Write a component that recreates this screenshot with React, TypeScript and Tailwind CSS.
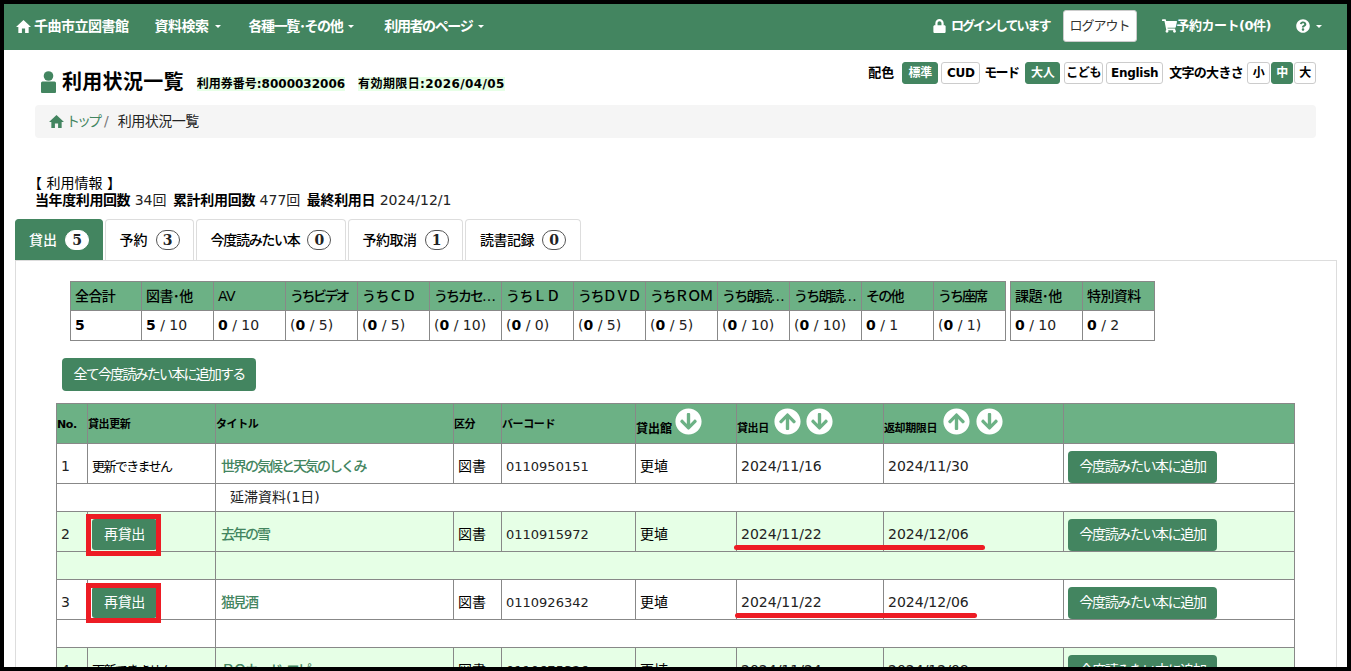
import { FaArrowCircleDown, FaArrowCircleUp, FaLock, FaQuestionCircle, FaShoppingCart } from "react-icons/fa";

const Caret = () => <span className="ml-[6px] inline-block h-0 w-0 border-x-[3px] border-t-[3px] border-x-transparent border-t-white align-middle" />;

const HomeIcon = ({ className }: { className: string }) => (
  <svg viewBox="0 0 16 16" className={className} fill="currentColor">
    <path d="M8 1 16 8.5H13.5V15H9.7V10H6.3V15H2.5V8.5H0Z" />
  </svg>
);

const UserIcon = ({ className }: { className: string }) => (
  <svg viewBox="0 0 15 22" className={className} fill="currentColor">
    <circle cx="7.5" cy="5" r="4.8" />
    <path d="M1.5 10.5H13.5Q15 10.5 15 12V21Q15 22 14 22H1Q0 22 0 21V12Q0 10.5 1.5 10.5Z" />
  </svg>
);

const tabs = [
  { label: "貸出", count: 5, width: "w-[88px]", track: "tracking-[0px]", active: true },
  { label: "予約", count: 3, width: "w-[89px]", track: "tracking-[0px]", active: false },
  { label: "今度読みたい本", count: 0, width: "w-[150px]", track: "tracking-[-1.3px]", active: false },
  { label: "予約取消", count: 1, width: "w-[115px]", track: "tracking-[-0.5px]", active: false },
  { label: "読書記録", count: 0, width: "w-[116px]", track: "tracking-[-0.5px]", active: false },
];

const summaryOne = [
  ["全合計", "", "5", "", "tracking-[-0.6px] w-[71px]"],
  ["図書･他", "", "5", " / 10", "tracking-[-0.6px] w-[72px]"],
  ["AV", "", "0", " / 10", "tracking-[-0.6px] w-[72px]"],
  ["うちビデオ", "(", "0", " / 5)", "tracking-[-2.5px] w-[72px]"],
  ["うちＣＤ", "(", "0", " / 5)", "tracking-[-0.6px] w-[72px]"],
  ["うちカセ…", "(", "0", " / 10)", "tracking-[-2px] w-[72px]"],
  ["うちＬＤ", "(", "0", " / 0)", "tracking-[-0.6px] w-[72px]"],
  ["うちＤＶＤ", "(", "0", " / 5)", "tracking-[-1.6px] w-[72px]"],
  ["うちＲＯＭ", "(", "0", " / 5)", "tracking-[-1.6px] w-[72px]"],
  ["うち朗読…", "(", "0", " / 10)", "tracking-[-1.8px] w-[72px]"],
  ["うち朗読…", "(", "0", " / 10)", "tracking-[-1.8px] w-[72px]"],
  ["その他", "", "0", " / 1", "tracking-[-1.8px] w-[72px]"],
  ["うち座席", "(", "0", " / 1)", "tracking-[-2px] w-[72px]"],
];

const summaryTwo = [
  ["課題･他", "", "0", " / 10", "tracking-[-0.6px] w-[72px]"],
  ["特別資料", "", "0", " / 2", "tracking-[-0.6px] w-[72px]"],
];

const rows = [
  { no: 1, title: "世界の気候と天気のしくみ", code: "0110950151", out: "2024/11/16", due: "2024/11/30", note: "延滞資料(1日)", renew: false, tint: false },
  { no: 2, title: "去年の雪", code: "0110915972", out: "2024/11/22", due: "2024/12/06", note: "", renew: true, tint: true },
  { no: 3, title: "猫見酒", code: "0110926342", out: "2024/11/22", due: "2024/12/06", note: "", renew: true, tint: false },
  { no: 4, title: "ＲＯカード･エピ", code: "0110675326", out: "2024/11/24", due: "2024/12/08", note: "", renew: false, tint: true },
];

const Toggle = ({ label, on, w }: { label: string; on?: boolean; w: string }) => (
  <span className={`flex h-[22px] items-center justify-center rounded-[3px] border text-[12px] font-bold tracking-[-0.3px] ${w} ${on ? "border-[#438560] bg-[#438560] text-white" : "border-[#ccc] bg-white text-black"}`}>
    {label}
  </span>
);

const SortIcon = ({ up }: { up?: boolean }) =>
  up ? <FaArrowCircleUp className="h-[27px] w-[27px] text-white" /> : <FaArrowCircleDown className="h-[27px] w-[27px] text-white" />;

const SummaryTable = ({ items, tableClass }: { items: string[][]; tableClass: string }) => (
  <table className={`table-fixed border-collapse ${tableClass}`}>
    <thead>
      <tr className="h-[29px] bg-[#6cb185]">
        {items.map((c, i) => (
          <th key={i} className={`${c[4]} overflow-hidden whitespace-nowrap border border-[#888] px-[4px] text-left text-[14px] font-medium text-black`}>{c[0]}</th>
        ))}
      </tr>
    </thead>
    <tbody>
      <tr className="h-[30px] bg-white">
        {items.map((c, i) => (
          <td key={i} className="whitespace-nowrap border border-[#888] px-[4px] text-[14px] text-[#222]">
            {c[1]}<b className="text-black">{c[2]}</b>{c[3]}
          </td>
        ))}
      </tr>
    </tbody>
  </table>
);

export default function App() {
  return (
    <div className="relative h-[671px] w-[1351px] overflow-hidden border-[4px] border-black bg-white text-[13px] text-black [font-family:'DejaVu_Sans','Noto_Sans_CJK_JP',sans-serif]">
      <nav className="flex h-[46px] items-center justify-between bg-[#438560] pb-[2px] text-[14px] font-bold text-white">
        <div className="flex items-center pl-[12px]">
          <HomeIcon className="h-[15px] w-[15px]" />
          <span className="ml-[3px] tracking-[-0.5px]">千曲市立図書館</span>
          <span className="ml-[26px] tracking-[-0.5px]">資料検索<Caret /></span>
          <span className="ml-[28px] tracking-[-1.4px]">各種一覧･その他<Caret /></span>
          <span className="ml-[30px] tracking-[-1.4px]">利用者のページ<Caret /></span>
        </div>
        <div className="flex items-center pr-[25px] text-[13px]">
          <FaLock className="h-[14px] w-[13px]" />
          <span className="ml-[5px] tracking-[-2px]">ログインしています</span>
          <span className="ml-[13px] flex h-[32px] w-[74px] items-center justify-center rounded-[3px] border border-[#ccc] bg-white text-[13px] font-normal tracking-[-1px] text-[#333]">ログアウト</span>
          <FaShoppingCart className="ml-[25px] h-[14px] w-[15px]" />
          <span className="tracking-[-0.5px]">予約カート(0件)</span>
          <FaQuestionCircle className="ml-[25px] h-[14px] w-[14px]" />
          <Caret />
        </div>
      </nav>

      <div className="px-[31px]">
        <div className="flex h-[55px] items-start justify-between">
          <div className="flex items-center pl-[6px] pt-[18px]">
            <UserIcon className="h-[22px] w-[15px] text-[#438560]" />
            <h1 className="ml-[6px] text-[20px] font-bold leading-[28px] tracking-[0.3px]">利用状況一覧</h1>
            <span className="ml-[13px] mt-[4px] bg-[#e6ffe6] text-[12px] font-bold leading-[14px]">利用券番号:8000032006</span>
            <span className="ml-[13px] mt-[4px] bg-[#e6ffe6] text-[12px] font-bold leading-[14px] tracking-[0.4px]">有効期限日:2026/04/05</span>
          </div>
          <div className="flex items-center pt-[12px] text-[13px] font-bold">
            <span className="mr-[8px]">配色</span>
            <Toggle label="標準" on w="w-[36px]" />
            <span className="ml-[3px]"><Toggle label="CUD" w="w-[39px]" /></span>
            <span className="ml-[4px] mr-[7px] tracking-[-1.7px]">モード</span>
            <Toggle label="大人" on w="w-[35px]" />
            <span className="ml-[4px]"><Toggle label="こども" w="w-[39px]" /></span>
            <span className="ml-[3px]"><Toggle label="English" w="w-[57px]" /></span>
            <span className="ml-[6px] mr-[4px] tracking-[-0.7px]">文字の大きさ</span>
            <Toggle label="小" w="w-[23px]" />
            <span className="ml-[1px]"><Toggle label="中" on w="w-[22px]" /></span>
            <span className="ml-[1px]"><Toggle label="大" w="w-[22px]" /></span>
          </div>
        </div>
        <div className="flex h-[33px] items-center rounded-[4px] bg-[#f5f5f5] pl-[14px] text-[14px]">
          <HomeIcon className="h-[15px] w-[15px] text-[#438560]" />
          <span className="ml-[2px] tracking-[-3px] text-[#438560]">トップ</span>
          <span className="ml-[5px] text-[#777]">/</span>
          <span className="ml-[9px] tracking-[-0.5px] text-[#222]">利用状況一覧</span>
        </div>
        <div className="mt-[37px] text-[14px] leading-[17px]">
          <div className="-ml-[7px]">【 利用情報 】</div>
          <div className="whitespace-nowrap text-[#222]">
            <b className="tracking-[-0.4px] text-black">当年度利用回数</b> 34回 <b className="ml-[2px] tracking-[-0.3px] text-black">累計利用回数</b> 477回 <b className="ml-[2px] tracking-[-0.3px] text-black">最終利用日</b> 2024/12/1
          </div>
        </div>
      </div>

      <div className="ml-[11px] mr-[10px] mt-[10px]">
        <div className="flex gap-[2px]">
          {tabs.map((t) => (
            <div key={t.label} className={`flex h-[41px] items-center justify-center gap-[8px] rounded-t-[4px] border border-b-0 text-[14px] font-medium ${t.width} ${t.active ? "border-[#438560] bg-[#438560] text-white" : "border-[#ddd] bg-white text-black"}`}>
              <span className={t.track}>{t.label}</span>
              <span className={`flex h-[20px] w-[24px] items-center justify-center rounded-full border border-[#555] text-[14px] font-bold [font-family:'DejaVu_Serif',serif] ${t.active ? "border-white bg-white text-[#222]" : "bg-white text-[#222]"}`}>{t.count}</span>
            </div>
          ))}
        </div>
        <div className="h-[500px] border border-[#ddd] pl-[54px] pt-[20px]">
          <div className="flex gap-[4px]">
            <SummaryTable items={summaryOne} tableClass="w-[935px]" />
            <SummaryTable items={summaryTwo} tableClass="w-[144px]" />
          </div>
          <button className="-ml-[8px] mt-[17px] h-[33px] w-[194px] rounded-[4px] bg-[#438560] text-[14px] tracking-[-1.8px] text-white">全て今度読みたい本に追加する</button>
          <table className="-ml-[14px] mt-[12px] w-[1238px] table-fixed border-collapse">
            <colgroup>
              <col className="w-[31px]" />
              <col className="w-[128px]" />
              <col className="w-[238px]" />
              <col className="w-[48px]" />
              <col className="w-[134px]" />
              <col className="w-[101px]" />
              <col className="w-[147px]" />
              <col className="w-[180px]" />
              <col className="w-[231px]" />
            </colgroup>
            <thead>
              <tr className="h-[40px] bg-[#6cb185] text-left text-[11px] font-bold tracking-[-0.4px]">
                <th className="border border-[#888] pt-[3px]">No.</th>
                <th className="border border-[#888] pt-[3px]">貸出更新</th>
                <th className="border border-[#888] pt-[3px]">タイトル</th>
                <th className="border border-[#888] pt-[3px]">区分</th>
                <th className="border border-[#888] pt-[3px]">バーコード</th>
                <th className="border border-[#888] pb-[5px]">
                  <span className="flex items-end gap-[3px]"><span className="mb-[-3px] text-[12px] tracking-[0px]">貸出館</span><SortIcon /></span>
                </th>
                <th className="border border-[#888] pb-[5px]">
                  <span className="flex items-end gap-[5px]"><span className="mb-[-3px]">貸出日</span><SortIcon up /><SortIcon /></span>
                </th>
                <th className="border border-[#888] pb-[5px]">
                  <span className="flex items-end gap-[6px]"><span className="mb-[-3px]">返却期限日</span><SortIcon up /><SortIcon /></span>
                </th>
                <th className="border border-[#888]"></th>
              </tr>
            </thead>
            <tbody>
              {rows.flatMap((r) => {
                const tint = r.tint ? "bg-[#e6ffe6]" : "bg-white";
                return [
                  <tr key={r.no} className={`h-[40px] text-[14px] ${tint}`}>
                    <td className="border border-[#888] pl-[4px] pt-[6px] text-[#222]">{r.no}</td>
                    <td className="border border-[#888] pl-[4px] pt-[6px]">
                      {r.renew ? (
                        <button className="h-[31px] w-[65px] rounded-[3px] bg-[#438560] tracking-[-0.3px] text-white">再貸出</button>
                      ) : (
                        <span className="text-[13px] tracking-[-1.6px]">更新できません</span>
                      )}
                    </td>
                    <td className="border border-[#888] pl-[5px] pt-[6px] font-medium tracking-[-2px] text-[#438560]">{r.title}</td>
                    <td className="border border-[#888] pl-[4px] pt-[6px]">図書</td>
                    <td className="border border-[#888] pl-[4px] pt-[6px] text-[13px] text-[#222]">{r.code}</td>
                    <td className="border border-[#888] pl-[4px] pt-[6px]">更埴</td>
                    <td className="border border-[#888] pl-[4px] pt-[6px] text-[#222]">{r.out}</td>
                    <td className="border border-[#888] pl-[4px] pt-[6px] text-[#222]">{r.due}</td>
                    <td className="border border-[#888] pl-[4px] pt-[6px]">
                      <button className="h-[32px] w-[149px] rounded-[4px] bg-[#438560] tracking-[-1.4px] text-white">今度読みたい本に追加</button>
                    </td>
                  </tr>,
                  <tr key={`${r.no}-note`} className={`h-[28px] text-[14px] ${tint}`}>
                    <td colSpan={2} className="border border-[#888]"></td>
                    <td colSpan={7} className="border border-[#888] pl-[14px] text-[#222]">{r.note}</td>
                  </tr>,
                ];
              })}
            </tbody>
          </table>
        </div>
      </div>

      {/* red markup drawn over the shot */}
      <div className="absolute left-[82px] top-[510px] h-[42px] w-[75px] border-[5px] border-[#ed1c24]" />
      <div className="absolute left-[82px] top-[579px] h-[40px] w-[75px] border-[5px] border-[#ed1c24]" />
      <div className="absolute left-[730px] top-[541px] h-[5px] w-[251px] rounded-full bg-[#ed1c24]" />
      <div className="absolute left-[731px] top-[609px] h-[5px] w-[242px] rounded-full bg-[#ed1c24]" />
    </div>
  );
}
